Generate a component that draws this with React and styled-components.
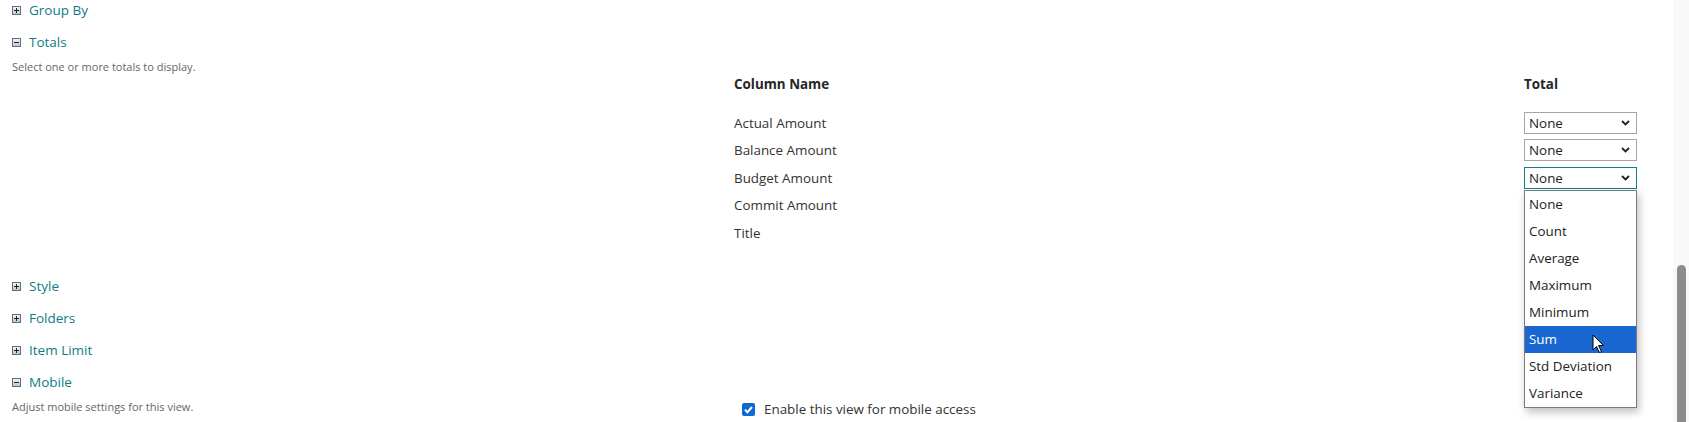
import styled, { createGlobalStyle } from 'styled-components'

const GlobalStyle = createGlobalStyle`
  html, body {
    margin: 0;
    padding: 0;
    background: #ffffff;
    font-family: "Open Sans", "Noto Sans", sans-serif;
    color: #333333;
  }
`

const Page = styled.div`
  display: flex;
  width: 1689px;
  height: 422px;
  overflow: hidden;
`

const Main = styled.main`
  flex: 1;
  padding-left: 12px;
`

const Section = styled.section`
  margin-bottom: 12px;
`

const Header = styled.div`
  display: flex;
  align-items: center;
  gap: 8px;
  height: 20px;
  font-size: 13.5px;
  color: #0e7c86;
  cursor: pointer;
`

const Body = styled.div`
  display: grid;
  grid-template-columns: 722px 1fr;
  padding-top: 7px;
  padding-bottom: ${p => p.$bottom || 0}px;
`

const Description = styled.div`
  font-size: 11px;
  line-height: 16px;
  color: #666666;
`

const TotalsGrid = styled.div`
  display: grid;
  grid-template-columns: 790px 113px;
  font-size: 13.4px;
`

const HeadCell = styled.div`
  font-weight: 700;
  color: #262626;
  padding: 15px 0;
  line-height: 20px;
`

const Cell = styled.div`
  height: 27.5px;
  display: flex;
  align-items: center;
  position: relative;
`

const Select = styled.div`
  box-sizing: border-box;
  width: 113px;
  height: 22px;
  border: 1px solid ${p => (p.$focus ? '#0f8085' : '#a6a6a6')};
  display: flex;
  align-items: center;
  justify-content: space-between;
  padding: 0 6px 0 4px;
  font-size: 13.4px;
  color: #222222;
  background: #ffffff;
`

const List = styled.ul`
  position: absolute;
  top: 25.5px;
  left: 0;
  box-sizing: border-box;
  width: 113px;
  margin: 0;
  padding: 0;
  list-style: none;
  background: #ffffff;
  border: 1px solid #7a7a7a;
  box-shadow: 2px 4px 8px rgba(0, 0, 0, 0.25);
  z-index: 5;
`

const Option = styled.li`
  height: 27px;
  line-height: 27px;
  padding: 0 4px;
  font-size: 13.4px;
  color: ${p => (p.$active ? '#ffffff' : '#222222')};
  background: ${p => (p.$active ? '#1a67d2' : 'transparent')};
  position: relative;
`

const Pointer = styled.svg`
  position: absolute;
  left: 67px;
  top: 8px;
`

const CheckRow = styled.label`
  display: flex;
  align-items: center;
  gap: 9px;
  font-size: 13.4px;
  line-height: 20px;
  padding-left: 8px;
  color: #333333;
`

const Scrollbar = styled.div`
  width: 16px;
  background: #f9f9f9;
  padding-top: 265px;
  box-sizing: border-box;
`

const Thumb = styled.div`
  width: 9px;
  height: 200px;
  margin-left: 4px;
  border-radius: 5px 5px 0 0;
  background: #8c8c8c;
`

function ToggleIcon({ open }) {
  return (
    <svg width="9" height="9" viewBox="0 0 9 9">
      <defs>
        <linearGradient id={open ? 'gm' : 'gp'} x1="0" y1="0" x2="0" y2="1">
          <stop offset="0" stopColor="#f4f6f8" />
          <stop offset="1" stopColor="#b9c3ce" />
        </linearGradient>
      </defs>
      <rect x="0.5" y="0.5" width="8" height="8" fill={`url(#${open ? 'gm' : 'gp'})`} stroke="#5f6e7e" />
      <rect x="2" y="4" width="5" height="1" fill="#222222" />
      {!open && <rect x="4" y="2" width="1" height="5" fill="#222222" />}
    </svg>
  )
}

function Chevron() {
  return (
    <svg width="9" height="6" viewBox="0 0 9 6">
      <path d="M1 1 L4.5 4.5 L8 1" fill="none" stroke="#222" strokeWidth="1.8" />
    </svg>
  )
}

function SectionHeader({ title, open }) {
  return (
    <Header>
      <ToggleIcon open={open} />
      <span>{title}</span>
    </Header>
  )
}

const columns = ['Actual Amount', 'Balance Amount', 'Budget Amount', 'Commit Amount', 'Title']
const options = ['None', 'Count', 'Average', 'Maximum', 'Minimum', 'Sum', 'Std Deviation', 'Variance']

export default function App() {
  return (
    <Page>
      <GlobalStyle />
      <Main>
        <Section>
          <SectionHeader title="Group By" />
        </Section>

        <Section>
          <SectionHeader title="Totals" open />
          <Body $bottom={17.5}>
            <Description>Select one or more totals to display.</Description>
            <TotalsGrid>
              <HeadCell>Column Name</HeadCell>
              <HeadCell>Total</HeadCell>
              {columns.map((name, i) => (
                <>
                  <Cell key={name}>{name}</Cell>
                  <Cell key={name + '-total'}>
                    {i < 3 && (
                      <Select $focus={i === 2}>
                        <span>None</span>
                        <Chevron />
                      </Select>
                    )}
                    {i === 2 && (
                      <List>
                        {options.map(opt => (
                          <Option key={opt} $active={opt === 'Sum'}>
                            {opt}
                            {opt === 'Sum' && (
                              <Pointer width="13" height="20" viewBox="0 0 13 20">
                                <path d="M1 1 L1 16 L4.5 12.5 L7.5 18.5 L9.5 17.5 L6.5 11.5 L11.5 11.5 Z" fill="#ffffff" stroke="#000000" strokeWidth="1" strokeLinejoin="round" />
                              </Pointer>
                            )}
                          </Option>
                        ))}
                      </List>
                    )}
                  </Cell>
                </>
              ))}
            </TotalsGrid>
          </Body>
        </Section>

        <Section>
          <SectionHeader title="Style" />
        </Section>
        <Section>
          <SectionHeader title="Folders" />
        </Section>
        <Section>
          <SectionHeader title="Item Limit" />
        </Section>

        <Section>
          <SectionHeader title="Mobile" open />
          <Body>
            <Description>Adjust mobile settings for this view.</Description>
            <CheckRow>
              <svg width="13" height="13" viewBox="0 0 13 13">
                <rect x="0" y="0" width="13" height="13" rx="2" fill="#0b6ad3" />
                <path d="M3 6.8 L5.4 9.2 L10 4" fill="none" stroke="#ffffff" strokeWidth="2" />
              </svg>
              <span>Enable this view for mobile access</span>
            </CheckRow>
          </Body>
        </Section>
      </Main>
      <Scrollbar>
        <Thumb />
      </Scrollbar>
    </Page>
  )
}
